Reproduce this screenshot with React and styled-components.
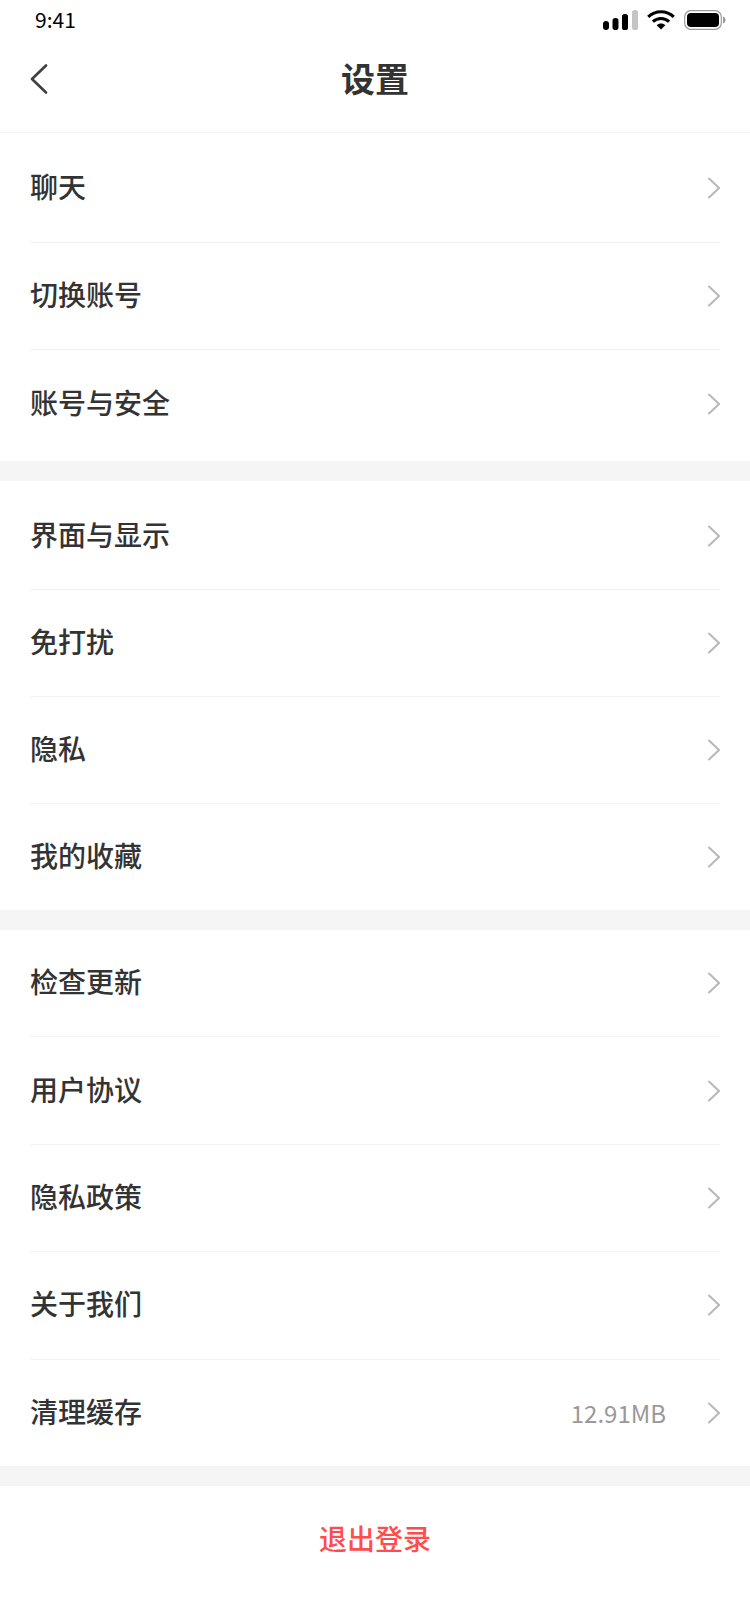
import styled, { createGlobalStyle } from "styled-components";

const GlobalStyle = createGlobalStyle`
   * {
      box-sizing: border-box;
   }
   body {
      margin: 0;
      background: #fff;
      color: #333;
      font-family: "Noto Sans CJK SC", sans-serif;
   }
   button {
      font-family: inherit;
      cursor: pointer;
   }
   svg {
      display: block;
   }
`;

const StatusBar = styled.div`
   height: 40px;
   padding: 0 24px 0 35px;
   display: flex;
   align-items: center;
   justify-content: space-between;
`;

const Time = styled.span`
   padding-bottom: 3px;
   color: #000;
   font-size: 21px;
   line-height: 30px;
`;

const StatusIcons = styled.div`
   display: flex;
   align-items: center;
   gap: 9px;
`;

const Header = styled.header`
   height: 93px;
   padding: 0 30px 14px;
   display: grid;
   grid-template-columns: 40px 1fr 40px;
   align-items: center;
   border-bottom: 1px solid #f2f2f2;
`;

const BackButton = styled.button`
   height: 40px;
   padding: 0;
   display: flex;
   align-items: center;
   border: 0;
   background: none;
   color: #404042;
`;

const Title = styled.h1`
   margin: 0;
   padding-bottom: 2px;
   font-size: 34px;
   font-weight: 700;
   line-height: 48px;
   text-align: center;
`;

const Group = styled.ul`
   min-height: ${({ $minHeight }) => $minHeight}px;
   margin: 0;
   padding: ${({ $padding }) => $padding};
   display: grid;
   list-style: none;
   border-bottom: 20px solid #f5f5f5;
`;

const Item = styled.li`
   display: flex;
   border-bottom: 1px solid #f2f2f2;

   &:last-child {
      border-bottom: 0;
   }
`;

const Row = styled.button`
   flex: 1;
   min-height: 106px;
   padding: 0;
   display: flex;
   align-items: center;
   border: 0;
   background: none;
   color: #333;
   font-size: 28px;
   font-weight: 500;
   text-align: left;
`;

const Label = styled.span`
   flex: 1;
   padding-bottom: 4px;
`;

const Value = styled.span`
   margin-right: 42px;
   color: #999;
   font-size: 24px;
   font-weight: 400;
`;

const LogoutButton = styled.button`
   width: 100%;
   height: 104px;
   padding: 0;
   border: 0;
   background: none;
   color: #ff4d4d;
   font-size: 28px;
   font-weight: 500;
`;

const groups = [
   {
      minHeight: 348,
      padding: "2px 30px 4px",
      items: [{ label: "聊天" }, { label: "切换账号" }, { label: "账号与安全" }],
   },
   {
      minHeight: 449,
      padding: "2px 30px 0",
      items: [{ label: "界面与显示" }, { label: "免打扰" }, { label: "隐私" }, { label: "我的收藏" }],
   },
   {
      minHeight: 556,
      padding: "0 30px",
      items: [
         { label: "检查更新" },
         { label: "用户协议" },
         { label: "隐私政策" },
         { label: "关于我们" },
         { label: "清理缓存", value: "12.91MB" },
      ],
   },
];

function SignalIcon() {
   return (
      <svg width="35" height="20" viewBox="0 0 35 20">
         <rect x="0" y="11" width="6" height="9" rx="3" />
         <rect x="9.5" y="8" width="6" height="12" rx="2.8" />
         <rect x="19" y="4" width="6" height="16" rx="2.6" />
         <rect x="29" y="0" width="6" height="20" rx="2.6" fill="#c4c4c4" />
      </svg>
   );
}

function WifiIcon() {
   return (
      <svg width="28" height="20" viewBox="0 0 28 20" fill="none" stroke="#000" strokeWidth="3">
         <path d="M1.2 6.8C8.4 0 19.6 0 26.8 6.8" />
         <path d="M5.9 11.6C10.5 7.3 17.5 7.3 22.1 11.6" />
         <path d="M9.7 15.2C12 12.8 16 12.8 18.3 15.2L14 19.4Z" fill="#000" stroke="none" />
      </svg>
   );
}

function BatteryIcon() {
   return (
      <svg width="42" height="20" viewBox="0 0 42 20">
         <rect x="0.7" y="0.7" width="36.6" height="18.6" rx="6" fill="none" stroke="#999" strokeWidth="1.2" />
         <rect x="3" y="3" width="32" height="14" rx="4" />
         <path d="M39 6.5c3.4 1 3.4 6 0 7z" fill="#999" />
      </svg>
   );
}

function BackIcon() {
   return (
      <svg
         width="18"
         height="30"
         viewBox="0 0 18 30"
         fill="none"
         stroke="currentColor"
         strokeWidth="2.6"
         strokeLinecap="round"
         strokeLinejoin="round"
      >
         <path d="M16 1.5L2 15l14 13.5" />
      </svg>
   );
}

function Chevron() {
   return (
      <svg width="12" height="22" viewBox="0 0 12 22" fill="none" stroke="#b8b8b8" strokeWidth="2">
         <path d="M1 1.5l10 9.5L1 20.5" strokeLinecap="round" />
      </svg>
   );
}

function App() {
   return (
      <>
         <GlobalStyle />
         <StatusBar>
            <Time>9:41</Time>
            <StatusIcons>
               <SignalIcon />
               <WifiIcon />
               <BatteryIcon />
            </StatusIcons>
         </StatusBar>
         <Header>
            <BackButton aria-label="返回">
               <BackIcon />
            </BackButton>
            <Title>设置</Title>
         </Header>
         <main>
            {groups.map(({ items, padding, minHeight }) => (
               <Group key={items[0].label} $padding={padding} $minHeight={minHeight}>
                  {items.map(({ label, value }) => (
                     <Item key={label}>
                        <Row>
                           <Label>{label}</Label>
                           {value && <Value>{value}</Value>}
                           <Chevron />
                        </Row>
                     </Item>
                  ))}
               </Group>
            ))}
            <LogoutButton>退出登录</LogoutButton>
         </main>
      </>
   );
}

export default App;
